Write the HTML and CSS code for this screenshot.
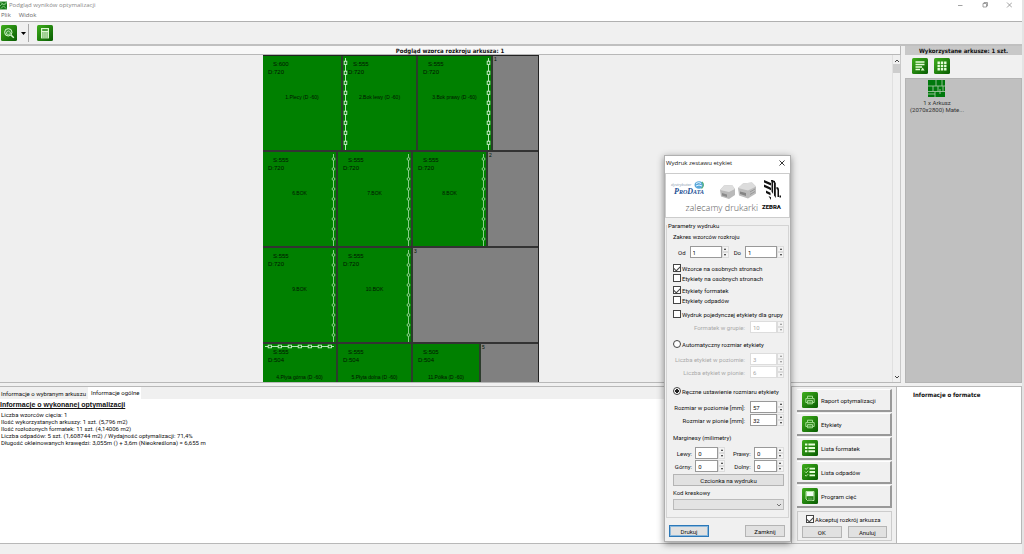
FILE: index.html
```html
<!DOCTYPE html>
<html lang="pl">
<head>
<meta charset="utf-8">
<title>Podgląd wyników optymalizacji</title>
<link rel="stylesheet" href="styles.css">
</head>
<body>
<svg class="defs" aria-hidden="true">
  <defs>
    <linearGradient id="green" x1="0" y1="0" x2="1" y2="1"><stop offset="0" stop-color="#3fae1c"/><stop offset="1" stop-color="#085c02"/></linearGradient>
    <pattern id="squares-v" width="5" height="10" patternUnits="userSpaceOnUse"><path d="M2.5 0V10" stroke="#b4e4b4"/><rect x="1.2" y="3.2" width="2.6" height="3.2" fill="#008000" stroke="#d0f0d0" stroke-width=".9"/></pattern>
    <pattern id="squares-h" width="10" height="5" patternUnits="userSpaceOnUse"><path d="M0 2.5H10" stroke="#b4e4b4"/><rect x="3.2" y="1.2" width="3.2" height="2.6" fill="#008000" stroke="#d0f0d0" stroke-width=".9"/></pattern>
    <pattern id="rings-v" width="5" height="10" patternUnits="userSpaceOnUse"><path d="M2.5 0V10" stroke="#8ccc8c"/><circle cx="2.5" cy="5" r="1.4" fill="#008000" stroke="#a8dca8" stroke-width=".8"/></pattern>
    <symbol id="tile" viewBox="0 0 16 16"><rect width="16" height="16" rx="1.5" fill="url(#green)"/></symbol>
    <symbol id="i-printer" viewBox="0 0 16 16"><use href="#tile"/><path d="M5.500 6V4.200h5V6M5 10.500H3.800V6.600h8.400v3.900H11M5.500 8.600h5v3.200h-5zM6.200 10.200h3.600" fill="none" stroke="#b0e4a0" stroke-width=".9"/></symbol>
    <symbol id="i-list" viewBox="0 0 16 16"><use href="#tile"/><path d="M3 3.500h2.400v2H3zm0 3.400h2.400v2H3zm0 3.400h2.400v2H3zM6.400 3.500H13v2H6.400zm0 3.400H13v2H6.400zm0 3.400H13v2H6.400z" fill="#e6ffd8"/></symbol>
    <symbol id="i-checks" viewBox="0 0 16 16"><use href="#tile"/><path d="M3 4.200l1.200 1.200 1.900-2M3 7.600l1.200 1.200 1.900-2M3 11l1.200 1.200 1.900-2" fill="none" stroke="#d8f8c8" stroke-width=".8"/><path d="M7.500 3.700H13v1.800H7.500zm0 3.400H13v1.800H7.500zm0 3.400H13v1.800H7.500z" fill="#e6ffd8"/></symbol>
    <symbol id="i-disk" viewBox="0 0 16 16"><use href="#tile"/><path d="M4 3.500h8v9H5.500L4 11z" fill="none" stroke="#c8f0b8" stroke-width=".9"/><path d="M4.500 4h7v4.200h-7z" fill="#f0fff0"/><path d="M6 9.500h4.500v3H6z" fill="#4d9c40"/></symbol>
    <symbol id="i-zoom" viewBox="0 0 16 16"><use href="#tile"/><circle cx="7.300" cy="7.300" r="3.700" fill="#3c9a35" stroke="#d8f8d0"/><path d="M10.200 10.200l2.600 2.600" stroke="#d8f8d0" stroke-width="1.500"/><path d="M5.500 7.200l2-1.200 1.800 1.200v1.700l-1.800.8-2-.8z" fill="none" stroke="#d8f8d0" stroke-width=".7"/></symbol>
    <symbol id="i-calc" viewBox="0 0 16 16"><use href="#tile"/><path d="M4 3h8v10.400H4z" fill="#dff8d4"/><path d="M5.200 4.200h5.600v1.600H5.200z" fill="#2a8a1c"/><path d="M5.200 8h5.600M5.200 10h5.600M5.200 12h5.600" stroke="#2a8a1c" stroke-width="1" stroke-dasharray="1.400 .7"/></symbol>
    <symbol id="i-report" viewBox="0 0 16 16"><use href="#tile"/><path d="M3.500 4h9M3.500 6.500h9M3.500 9h6.500M3.500 11.500h4.500" stroke="#e6ffd8" stroke-width="1.500"/><path d="M8.800 12.600l1.800-3 2 3z" fill="#d8f8c8"/></symbol>
    <symbol id="i-grid" viewBox="0 0 16 16"><use href="#tile"/><path d="M3.500 3.500h2.400v2.400H3.500zm3.300 0h2.400v2.400H6.800zm3.300 0h2.400v2.400h-2.400zM3.500 6.800h2.400v2.400H3.500zm3.300 0h2.400v2.400H6.800zm3.300 0h2.400v2.400h-2.400zM3.500 10.100h2.400v2.400H3.500zm3.300 0h2.400v2.400H6.800zm3.300 0h2.400v2.400h-2.400z" fill="#e6ffd8"/></symbol>
  </defs>
</svg>

<div class="app">
  <header class="titlebar">
    <svg class="app-icon" viewBox="0 0 8 9"><rect width="8" height="9" fill="#187a18"/><path d="M0 0l4 4 4-4M0 5l3-3 2 2 3-3M1 8l3-3 3 3" stroke="#8fcf88" fill="none"/></svg>
    <span>Podgląd wyników optymalizacji</span>
    <svg class="win-controls" viewBox="0 0 54 8"><path d="M0 4.500h4.500M25 2.500h3.500v3.500H25zM26 2.500V1.500h3.500V5h-1M49 1.500l5 5M54 1.500l-5 5" fill="none" stroke="#8a8a8a" stroke-width=".8"/></svg>
  </header>
  <nav class="menubar"><button>Plik</button><button>Widok</button></nav>
  <div class="toolbar">
    <button class="icon-btn" aria-label="Powiększenie"><svg><use href="#i-zoom"/></svg></button>
    <button class="drop" aria-label="Opcje powiększenia"><svg viewBox="0 0 5 3"><path d="M0 0h5L2.500 3z"/></svg></button>
    <button class="icon-btn" aria-label="Kalkulator"><svg><use href="#i-calc"/></svg></button>
  </div>

  <main class="work">
    <section class="preview">
      <h2>Podgląd wzorca rozkroju arkusza: 1</h2>
      <div class="viewport">
        <div class="canvas">
          <div class="sheet">
            <div class="strip">
              <div class="piece w80"><p class="dim">S:600</p><p>D:720</p><p class="name">1.Plecy (D -60)</p></div>
              <div class="piece w75"><svg class="edge left"><rect width="5" height="100%" fill="url(#squares-v)"/></svg><p class="dim">S:555</p><p>D:720</p><p class="name">2.Bok lewy (D -60)</p></div>
              <div class="piece w75"><svg class="edge right"><rect width="5" height="100%" fill="url(#squares-v)"/></svg><p class="dim">S:555</p><p>D:720</p><p class="name">3.Bok prawy (D -60)</p></div>
              <div class="waste">1</div>
            </div>
            <div class="strip">
              <div class="piece w75"><svg class="edge right"><rect width="5" height="100%" fill="url(#rings-v)"/></svg><p class="dim">S:555</p><p>D:720</p><p class="name">6.BOK</p></div>
              <div class="piece w75"><svg class="edge right"><rect width="5" height="100%" fill="url(#rings-v)"/></svg><p class="dim">S:555</p><p>D:720</p><p class="name">7.BOK</p></div>
              <div class="piece w75"><svg class="edge right"><rect width="5" height="100%" fill="url(#rings-v)"/></svg><p class="dim">S:555</p><p>D:720</p><p class="name">8.BOK</p></div>
              <div class="waste">2</div>
            </div>
            <div class="strip">
              <div class="piece w75"><svg class="edge right"><rect width="5" height="100%" fill="url(#rings-v)"/></svg><p class="dim">S:555</p><p>D:720</p><p class="name">9.BOK</p></div>
              <div class="piece w75"><svg class="edge right"><rect width="5" height="100%" fill="url(#rings-v)"/></svg><p class="dim">S:555</p><p>D:720</p><p class="name">10.BOK</p></div>
              <div class="waste">3</div>
            </div>
            <div class="strip">
              <div class="piece w75"><svg class="edge top"><rect width="100%" height="5" fill="url(#squares-h)"/></svg><p class="dim">S:555</p><p>D:504</p><p class="name">4.Płyta górna (D -60)</p></div>
              <div class="piece w75"><p class="dim">S:555</p><p>D:504</p><p class="name">5.Płyta dolna (D -60)</p></div>
              <div class="piece w68"><p class="dim">S:505</p><p>D:504</p><p class="name">11.Półka (D -60)</p></div>
              <div class="waste">5</div>
            </div>
          </div>
        </div>
        <div class="scrollbar">
          <svg viewBox="0 0 8 5"><path d="M2 4l2-2 2 2" fill="none" stroke="#444"/></svg>
          <i></i>
          <svg viewBox="0 0 8 5"><path d="M2 1l2 2 2-2" fill="none" stroke="#444"/></svg>
        </div>
      </div>
    </section>
    <aside class="sheets">
      <h2>Wykorzystane arkusze: 1 szt.</h2>
      <div class="sheet-tools">
        <button class="icon-btn" aria-label="Widok listy"><svg><use href="#i-report"/></svg></button>
        <button class="icon-btn" aria-label="Widok ikon"><svg><use href="#i-grid"/></svg></button>
      </div>
      <div class="sheet-list">
        <button class="sheet-item">
          <svg viewBox="0 0 17 17"><rect width="17" height="17" fill="#00780c"/><path d="M0 6h17M0 11.500h17M8 0v6M14 0v6M5 6v5.500M10 6v5.500M15 6v5.500M7 11.500V17M12 9v5M0 14h7" stroke="#9fc49f" stroke-width=".9"/></svg>
          <span>1 x Arkusz<br>(2070x2800) Mate...</span>
        </button>
      </div>
    </aside>
  </main>

  <section class="bottom">
    <div class="info">
      <div class="tabs" role="tablist">
        <button role="tab">Informacje o wybranym arkuszu</button>
        <button role="tab" class="active" aria-selected="true">Informacje ogólne</button>
      </div>
      <div class="report">
        <h3>Informacje o wykonanej optymalizacji</h3>
        <p>Liczba wzorców cięcia: 1</p>
        <p>Ilość wykorzystanych arkuszy: 1 szt. (5,796 m2)</p>
        <p>Ilość rozłożonych formatek: 11 szt. (4,14006 m2)</p>
        <p>Liczba odpadów: 5 szt. (1,608744 m2) / Wydajność optymalizacji: 71,4%</p>
        <p>Długość okleinowanych krawędzi: 3,055m () + 3,6m (Nieokreślona) = 6,655 m</p>
      </div>
    </div>
    <div class="actions">
      <button class="action"><svg><use href="#i-printer"/></svg>Raport optymalizacji</button>
      <button class="action"><svg><use href="#i-printer"/></svg>Etykiety</button>
      <button class="action"><svg><use href="#i-list"/></svg>Lista formatek</button>
      <button class="action"><svg><use href="#i-checks"/></svg>Lista odpadów</button>
      <button class="action"><svg><use href="#i-disk"/></svg>Program cięć</button>
      <div class="accept">
        <label class="check"><input type="checkbox" checked>Akceptuj rozkrój arkusza</label>
        <div class="pair"><button class="btn">OK</button><button class="btn">Anuluj</button></div>
      </div>
    </div>
    <div class="piece-info"><h3>Informacje o formatce</h3></div>
  </section>
  <footer class="statusbar"></footer>
</div>

<div class="dialog" role="dialog" aria-labelledby="dlg-title">
  <div class="dlg-title">
    <span id="dlg-title">Wydruk zestawu etykiet</span>
    <button aria-label="Zamknij okno"><svg viewBox="0 0 6 6"><path d="M.5.500l5 5M5.500.500l-5 5" stroke="#222" stroke-width=".9"/></svg></button>
  </div>
  <div class="banner">
    <div class="prodata">
      <small>dystrybutor</small>
      <b>P<span>RO</span>D<span>ATA</span></b>
      <svg viewBox="0 0 11 9"><ellipse cx="5" cy="4" rx="4.500" ry="3.800" fill="#5aa9dc"/><path d="M2 2.500q3-2 5 0M2 5q3-2 6 0" stroke="#e4f4ff" fill="none"/><path d="M8 1q3 3-.5 6.500" stroke="#55b078" fill="none" stroke-width="1.200"/></svg>
    </div>
    <svg class="printers" viewBox="0 0 38 18">
      <path d="M1 8l4-4.500 8-.5 3 4v6l-6 4-8-2.500z" fill="#b9b9b9"/><path d="M1 8l4-4.500 8-.5 3 4-6 3z" fill="#dedede"/><path d="M3 11l5 1.500v2.500L3 13.500z" fill="#8a8a8a"/>
      <path d="M19 6l5-4.500 9-1 4 4v7l-8 5-9-3z" fill="#bcbcbc"/><path d="M19 6l5-4.500 9-1 4 4-8 4z" fill="#dcdcdc"/><path d="M21 9.500l6 1.500v3l-6-2z" fill="#858585"/><path d="M31 10l5-3M31 12.500l5-3" stroke="#999"/>
    </svg>
    <span class="slogan">zalecamy drukarki</span>
    <div class="zebra">
      <svg viewBox="0 0 18 20"><path d="M1 0l7 3v2.500L1 2.500zM1 4.500l4.500 2V9L1 7zM3 10.500l4.500 2.200v2.500L3 13zM5.500 16l2.500 1.300V20zM8.500 0h1.600v14l-1.600-2.500zM11 2.500h1.800V18L11 15.500zM8 0l4 1v1.500L8 1.500zM13.500 7q2.500 0 2.500 3v7h-1.500v-6.500q0-1.500-1-1.500zM5.500 6.500l2.500 1.200v2.500L5.500 9zM16.500 15.500H18v2h-1.500z" fill="#111"/></svg>
      <b>ZEBRA</b>
    </div>
  </div>

  <fieldset class="params">
    <legend>Parametry wydruku</legend>
    <p class="caption">Zakres wzorców rozkroju</p>
    <div class="range">
      <label for="f-from">Od</label><span class="spin wide"><input id="f-from" value="1"><span class="arrows"><button aria-label="Więcej"></button><button aria-label="Mniej"></button></span></span>
      <label for="f-to">Do</label><span class="spin wide"><input id="f-to" value="1"><span class="arrows"><button aria-label="Więcej"></button><button aria-label="Mniej"></button></span></span>
    </div>
    <div class="checks">
      <label class="check"><input type="checkbox" checked>Wzorce na osobnych stronach</label>
      <label class="check"><input type="checkbox">Etykiety na osobnych stronach</label>
    </div>
    <div class="checks">
      <label class="check"><input type="checkbox" checked>Etykiety formatek</label>
      <label class="check"><input type="checkbox">Etykiety odpadów</label>
    </div>
    <div class="checks single">
      <label class="check"><input type="checkbox">Wydruk pojedynczej etykiety dla grupy</label>
    </div>
    <div class="line off"><label for="f-group">Formatek w grupie:</label><span class="spin"><input id="f-group" value="10" disabled><span class="arrows"><button disabled aria-label="Więcej"></button><button disabled aria-label="Mniej"></button></span></span></div>
    <label class="check mode"><input type="radio" name="size">Automatyczny rozmiar etykiety</label>
    <div class="line off"><label for="f-h">Liczba etykiet w poziomie:</label><span class="spin"><input id="f-h" value="3" disabled><span class="arrows"><button disabled aria-label="Więcej"></button><button disabled aria-label="Mniej"></button></span></span></div>
    <div class="line off"><label for="f-v">Liczba etykiet w pionie:</label><span class="spin"><input id="f-v" value="6" disabled><span class="arrows"><button disabled aria-label="Więcej"></button><button disabled aria-label="Mniej"></button></span></span></div>
    <label class="check mode manual"><input type="radio" name="size" checked>Ręczne ustawienie rozmiaru etykiety</label>
    <div class="line"><label for="f-w">Rozmiar w poziomie [mm]:</label><span class="spin"><input id="f-w" value="57"><span class="arrows"><button aria-label="Więcej"></button><button aria-label="Mniej"></button></span></span></div>
    <div class="line"><label for="f-hh">Rozmiar w pionie [mm]:</label><span class="spin"><input id="f-hh" value="32"><span class="arrows"><button aria-label="Więcej"></button><button aria-label="Mniej"></button></span></span></div>
    <p class="caption margins-title">Marginesy (milimetry)</p>
    <div class="margins">
      <label for="m-l">Lewy:</label><span class="spin"><input id="m-l" value="0"><span class="arrows"><button aria-label="Więcej"></button><button aria-label="Mniej"></button></span></span>
      <label for="m-r">Prawy:</label><span class="spin"><input id="m-r" value="0"><span class="arrows"><button aria-label="Więcej"></button><button aria-label="Mniej"></button></span></span>
      <label for="m-t">Górny:</label><span class="spin"><input id="m-t" value="0"><span class="arrows"><button aria-label="Więcej"></button><button aria-label="Mniej"></button></span></span>
      <label for="m-b">Dolny:</label><span class="spin"><input id="m-b" value="0"><span class="arrows"><button aria-label="Więcej"></button><button aria-label="Mniej"></button></span></span>
    </div>
    <button class="btn font-btn">Czcionka na wydruku</button>
    <label class="caption" for="f-code">Kod kreskowy</label>
    <div class="combo"><select id="f-code"><option></option></select><svg viewBox="0 0 6 4"><path d="M1 1l2 2 2-2" fill="none" stroke="#555" stroke-width=".8"/></svg></div>
  </fieldset>
  <div class="dlg-buttons"><button class="btn primary">Drukuj</button><button class="btn">Zamknij</button></div>
</div>
</body>
</html>
```

FILE: styles.css
```css
* { box-sizing: border-box; }
body, p, h2, h3 { margin: 0; }
body {
  font: 6px/7px Roboto, "Liberation Sans", sans-serif;
  color: #111;
  background: #f0f0f0;
}
button, input, select { font: inherit; color: inherit; margin: 0; padding: 0; border: 0; background: none; border-radius: 0; }
svg { display: block; }
.defs { position: absolute; width: 0; height: 0; }

.app { display: flex; flex-direction: column; height: 100vh; border-right: 2px solid #e4e4e4; }
.titlebar { display: flex; align-items: center; gap: 2px; height: 10px; background: #fff; color: #888; font: 6px/9px "Open Sans", sans-serif; }
.app-icon { width: 7px; height: 9px; }
.win-controls { width: 54px; height: 8px; margin-left: auto; margin-right: 10px; }
.menubar { display: flex; gap: 8px; height: 12px; padding: 0 1px; background: #fff; border-bottom: 1px solid #b0b0b0; color: #666; font: 6px/11px "Open Sans", sans-serif; }
.toolbar { display: flex; align-items: center; height: 24px; padding-left: 1px; border-bottom: 2px solid #c0c0c0; }
.icon-btn svg { width: 16px; height: 16px; }
.drop { width: 12px; height: 18px; margin-right: 8px; padding-left: 4px; border-right: 1px solid #a8a8a8; }
.drop svg { width: 5px; height: 3px; }

.work { display: flex; gap: 4px; flex: 1; min-height: 0; }
.preview { display: flex; flex-direction: column; flex: 1; min-width: 0; border-bottom: 1px solid #b8b8b8; }
h2, .piece-info h3 { text-align: center; font: bold 6px/9px "DejaVu Sans Condensed", "DejaVu Sans", sans-serif; color: #111; }
h2 { height: 9px; }
.preview h2 { background: #f8f8f8; border-bottom: 1px solid #b8b8b8; border-right: 1px solid #b8b8b8; }
.viewport { display: flex; flex: 1; min-height: 0; }
.canvas { display: flex; justify-content: center; align-items: flex-start; flex: 1; overflow: hidden; padding-right: 90px; background: #efefef; }
.scrollbar { display: flex; flex-direction: column; width: 9px; padding: 3px 0 2px; border-left: 1px solid #e0e0e0; border-right: 1px solid #c8c8c8; background: #f0f0f0; }
.scrollbar svg { width: 8px; height: 5px; }
.scrollbar i { height: 9px; margin: 1px 0 auto; background: #cdcdcd; }

.sheet { width: 276px; border: 1px solid #222; border-left: 0; background: #333; font: 6px/8px "Liberation Sans", sans-serif; color: #001400; }
.strip { display: flex; height: 96px; border-bottom: 2px solid #333; }
.piece { position: relative; padding: 4px 5px; background: #008000; border-right: 2px solid #2c3c2c; }
.piece .dim { padding-left: 5px; }
.piece .name { margin-top: 17px; text-align: center; font-size: 5px; }
.strip:last-child .name { margin-top: 9px; }
.w80 { width: 80px; }
.w75 { width: 75px; }
.w68 { width: 68px; }
.waste { flex: 1; padding-left: 1px; background: #808080; font-size: 5px; line-height: 6px; }
.edge { position: absolute; overflow: hidden; }
.edge.left { left: 0; top: 2px; width: 5px; height: 92px; }
.edge.right { right: 0; top: 2px; width: 5px; height: 92px; }
.edge.top { left: 2px; top: 0; width: 69px; height: 5px; }

.sheets { display: flex; flex-direction: column; width: 117px; }
.sheets h2 { background: #c8c8c8; }
.sheet-tools { display: flex; gap: 6px; padding: 3px 7px 4px; }
.sheet-list { flex: 1; background: #c0c0c0; border: 1px solid #b4b4b4; }
.sheet-item { display: flex; flex-direction: column; align-items: center; gap: 2px; margin: 1px 4px; color: #333; white-space: nowrap; }
.sheet-item svg { width: 17px; height: 17px; }

.bottom { display: flex; height: 161px; border-bottom: 1px solid #b8b8b8; padding-top: 3px; }
.info { display: flex; flex-direction: column; flex: 1; border-top: 1px solid #b8b8b8; border-right: 1px solid #b8b8b8; }
.tabs { display: flex; align-items: flex-end; height: 12px; }
.tabs button { height: 10px; padding: 0 2px 1px 1px; }
.tabs .active { height: 12px; padding: 0 2px 2px 3px; background: #fff; }
.report { flex: 1; padding: 2px 1px; background: #fff; }
.report h3 { margin: 0 0 2px -1px; font: bold 7px/8px "Liberation Sans", sans-serif; text-decoration: underline; }
.actions { display: flex; flex-direction: column; gap: 1px; width: 104px; padding: 2px 4px 2px 5px; border-top: 1px solid #b8b8b8; }
.action { display: flex; align-items: center; gap: 3px; height: 23px; padding-left: 5px; border-right: 2px solid #999; border-bottom: 2px solid #999; border-top: 1px solid #fff; text-align: left; }
.action svg { width: 16px; height: 16px; }
.accept { display: flex; flex-direction: column; gap: 3px; margin-top: 2px; padding: 3px 4px 2px; border: 1px solid #ccc; }
.accept .check { padding-left: 4px; }
.pair { display: flex; gap: 6px; }
.pair .btn { flex: 1; }
.piece-info { width: 126px; padding: 3px 0 0 16px; background: #fff; border: 1px solid #b8b8b8; border-bottom: 0; }
.piece-info h3 { text-align: left; }
.statusbar { height: 10px; }

.btn { height: 12px; background: #e1e1e1; border: 1px solid #b4b4b4; text-align: center; }
.check { display: flex; align-items: center; gap: 1px; white-space: nowrap; }
.check input { appearance: none; display: grid; place-content: center; flex: none; width: 8px; height: 8px; background: #fff; border: 1px solid #444; }
.check input[type=radio] { border-radius: 50%; }
.check input[type=radio]:checked { background: radial-gradient(circle, #222 0 2px, #fff 2px); }
.check input[type=checkbox]:checked::before { content: ""; width: 3px; height: 5px; margin-bottom: 1px; border: solid #444; border-width: 0 1px 1px 0; transform: rotate(45deg); }

.dialog { position: absolute; left: 664px; top: 155px; width: 127px; background: #f0f0f0; border: 1px solid #b0b0b0; box-shadow: 0 2px 7px rgba(0, 0, 0, .45); }
.dlg-title { display: flex; align-items: center; justify-content: space-between; height: 17px; padding: 0 5px 3px 1px; background: #fff; font: 6px/8px "Open Sans", sans-serif; }
.dlg-title svg { width: 6px; height: 6px; }
.banner { display: grid; grid-template-columns: 37px 1fr 21px; grid-template-rows: 23px 12px; height: 45px; padding: 6px 7px 0 5px; background: #fff; border: 1px solid #ccc; }
.prodata { position: relative; padding-top: 2px; color: #8a9ab0; }
.prodata small { display: block; font: italic 4px/6px "Open Sans", sans-serif; }
.prodata b { display: block; padding-left: 3px; font: italic bold 8px/8px "Liberation Serif", serif; color: #1b4f94; }
.prodata b span { font-size: 6px; }
.prodata svg { position: absolute; right: 3px; top: 1px; width: 11px; height: 9px; }
.printers { width: 38px; height: 18px; margin: 2px auto 0 11px; }
.slogan { grid-row: 2; grid-column: 1 / 3; justify-self: end; margin-right: 3px; font: 300 9px/10px "Open Sans", sans-serif; color: #555; white-space: nowrap; }
.zebra { grid-column: 3; grid-row: 1 / 3; display: flex; flex-direction: column; align-items: center; gap: 3px; color: #111; }
.zebra svg { width: 18px; height: 20px; }
.zebra b { font: 900 6px/8px Roboto, sans-serif; }

.params { min-width: 0; margin: 4px 1px 0; padding: 4px 4px 7px 6px; border: 1px solid #d4d4d4; }
.params legend { margin-left: -6px; padding: 0 1px; }
.caption { display: block; line-height: 8px; }
.range { display: flex; align-items: center; gap: 4px; margin: 5px 0 6px 5px; }
.range label:nth-of-type(2) { margin-left: auto; }
.spin { display: flex; width: 34px; height: 12px; }
.spin input { flex: 1; min-width: 0; padding: 0 2px; background: #fff; border: 1px solid #999; }
.spin .arrows { display: flex; flex-direction: column; width: 7px; }
.arrows button { display: flex; align-items: center; justify-content: center; flex: 1; background: #f4f4f4; border: 1px solid #ddd; }
.arrows button::before { content: ""; border: 1px solid transparent; border-top: 0; border-bottom: 2px solid #222; }
.arrows button:last-child::before { border-top: 2px solid #222; border-bottom: 0; }
.wide { width: 39px; }
.checks { display: flex; flex-direction: column; gap: 2px; margin-bottom: 4px; }
.checks.single { margin: 6px 0 3px; }
.line { display: flex; align-items: center; justify-content: flex-end; gap: 5px; margin-bottom: 1px; white-space: nowrap; }
.line.off { color: #aaa; }
.off .spin input { border-color: #ddd; }
.off .arrows button::before { opacity: .5; }
.mode { margin: 7px 0 5px; }
.mode.manual { margin: 9px 0 6px; }
.margins-title { margin: 8px 0 5px; }
.margins { display: grid; grid-template-columns: 19px auto 22px auto; align-items: center; column-gap: 2px; row-gap: 1px; justify-content: space-between; text-align: right; margin-bottom: 2px; }
.margins .spin { width: 30px; }
.font-btn { display: block; width: 100%; margin-bottom: 3px; }
.combo { display: grid; align-items: center; margin-top: 2px; }
.combo select { grid-area: 1 / 1; appearance: none; width: 100%; height: 11px; background: #e3e3e3; border: 1px solid #bbb; }
.combo svg { grid-area: 1 / 1; justify-self: end; width: 6px; height: 4px; margin-right: 2px; pointer-events: none; }
.dlg-buttons { display: flex; justify-content: space-between; padding: 7px 5px 4px 4px; }
.dlg-buttons .btn { width: 40px; }
.dlg-buttons .primary { border: 1px solid #2c78b8; outline: 1px solid #8ab8dc; outline-offset: -2px; }
```
